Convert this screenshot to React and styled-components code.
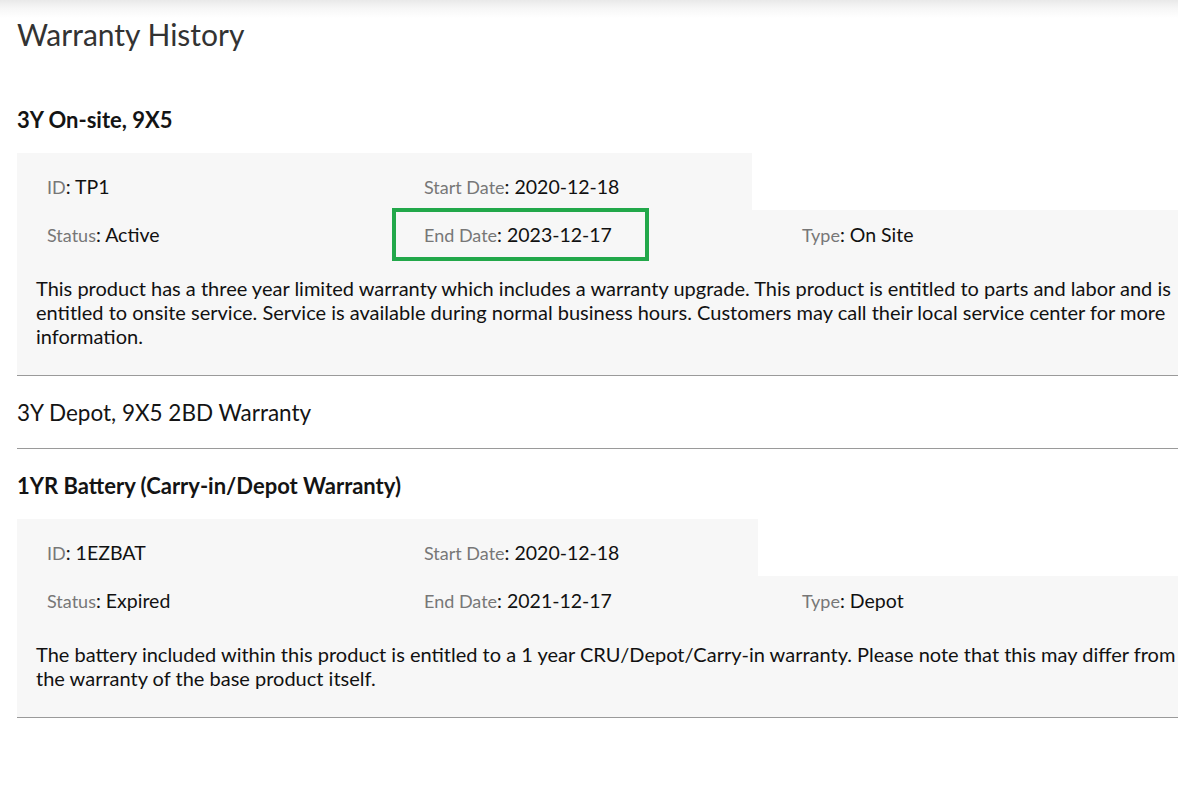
import React from "react";
import styled, { createGlobalStyle } from "styled-components";

const GlobalStyle = createGlobalStyle`
  html, body {
    margin: 0;
    padding: 0;
    background: #ffffff;
    overflow-x: hidden;
  }
  body {
    font-family: Lato, "Open Sans", Arial, sans-serif;
    color: #141414;
  }
`;

const Page = styled.div`
  position: relative;
  width: 1191px;
  padding: 16px 0 60px 17px;
  box-sizing: border-box;
  background: linear-gradient(to bottom, #e9e9e9 0px, #f6f6f6 8px, #ffffff 18px);
`;

const Title = styled.h1`
  margin: 0;
  font-size: 30px;
  line-height: 36px;
  font-weight: 400;
  color: #333333;
`;

const Section = styled.section`
  padding: 25px 0 ${(p) => (p.$collapsed ? "23px" : "0")};
  border-bottom: 1px solid #9a9a9a;
  &:first-of-type {
    padding-top: 56px;
  }
`;

const Heading = styled.h2`
  margin: 0;
  font-size: ${(p) => (p.$bold ? "22px" : "22.5px")};
  line-height: 24px;
  font-weight: ${(p) => (p.$bold ? 700 : 400)};
  color: #141414;
`;

const Card = styled.div`
  margin-top: 21px;
  display: flex;
  flex-direction: column;
`;

const Row = styled.div`
  display: grid;
  grid-template-columns: 377px 378px 1fr;
  padding: ${(p) => (p.$top ? "22px 0 11px 30px" : "13px 0 0 30px")};
  width: ${(p) => p.$width || "auto"};
  box-sizing: border-box;
  background: #f7f7f7;
`;

const Field = styled.div`
  position: relative;
  font-size: 19.5px;
  line-height: 24px;
  color: #111111;
  white-space: nowrap;
`;

const Label = styled.span`
  color: #777777;
  font-size: 18px;
`;

const Highlight = styled.span`
  position: absolute;
  left: -32px;
  top: -15px;
  width: 257px;
  height: 53px;
  box-sizing: border-box;
  border: 4px solid #22a84a;
  pointer-events: none;
`;

const Description = styled.p`
  margin: 0;
  padding: 29px 0 27px 19px;
  background: #f7f7f7;
  font-size: 20px;
  line-height: 24px;
  color: #111111;
`;

const warranties = [
  {
    title: "3Y On-site, 9X5",
    open: true,
    id: "TP1",
    start: "2020-12-18",
    end: "2023-12-17",
    status: "Active",
    type: "On Site",
    topWidth: "735px",
    highlightEnd: true,
    text:
      "This product has a three year limited warranty which includes a warranty upgrade. This product is entitled to parts and labor and is entitled to onsite service. Service is available during normal business hours. Customers may call their local service center for more information.",
  },
  { title: "3Y Depot, 9X5 2BD Warranty", open: false },
  {
    title: "1YR Battery (Carry-in/Depot Warranty)",
    open: true,
    id: "1EZBAT",
    start: "2020-12-18",
    end: "2021-12-17",
    status: "Expired",
    type: "Depot",
    topWidth: "741px",
    text:
      "The battery included within this product is entitled to a 1 year CRU/Depot/Carry-in warranty. Please note that this may differ from the warranty of the base product itself.",
  },
];

function Item({ label, value, highlight }) {
  return (
    <Field>
      {highlight && <Highlight />}
      <Label>{label}</Label>: {value}
    </Field>
  );
}

export default function App() {
  return (
    <>
      <GlobalStyle />
      <Page>
        <Title>Warranty History</Title>
        {warranties.map((w) => (
          <Section key={w.title} $collapsed={!w.open}>
            <Heading $bold={w.open}>{w.title}</Heading>
            {w.open && (
              <Card>
                <Row $top $width={w.topWidth}>
                  <Item label="ID" value={w.id} />
                  <Item label="Start Date" value={w.start} />
                </Row>
                <Row>
                  <Item label="Status" value={w.status} />
                  <Item label="End Date" value={w.end} highlight={w.highlightEnd} />
                  <Item label="Type" value={w.type} />
                </Row>
                <Description>{w.text}</Description>
              </Card>
            )}
          </Section>
        ))}
      </Page>
    </>
  );
}
